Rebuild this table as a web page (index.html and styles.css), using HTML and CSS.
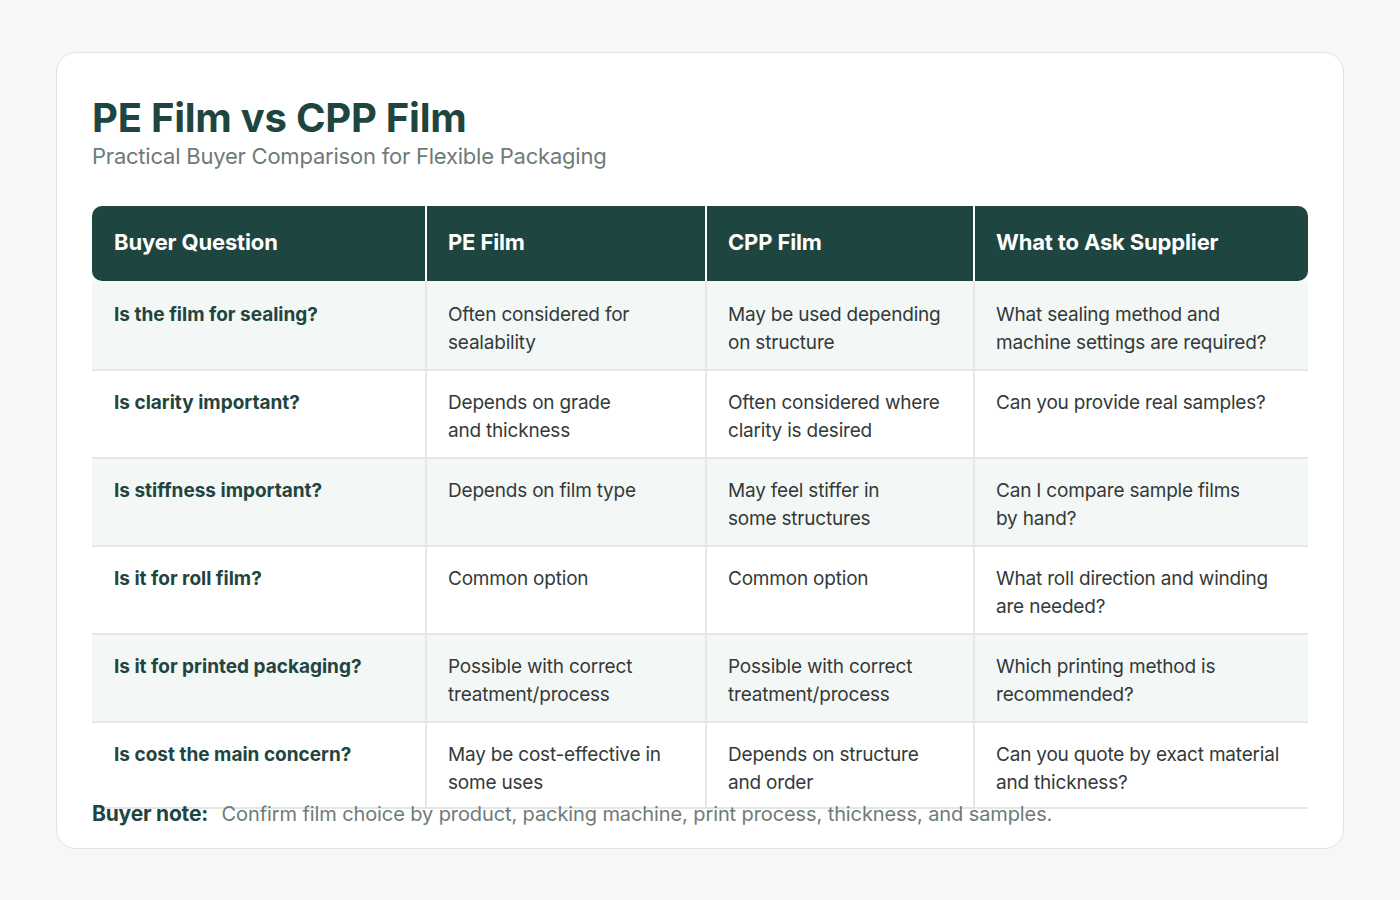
FILE: index.html
```html
<!DOCTYPE html>
<html lang="en">
<head>
<meta charset="utf-8">
<title>PE Film vs CPP Film</title>
<link rel="stylesheet" href="styles.css">
</head>
<body>
<div class="card">
  <h1 class="title">PE Film vs CPP Film</h1>
  <p class="subtitle">Practical Buyer Comparison for Flexible Packaging</p>
  <div class="table-wrap">
    <table class="cmp">
      <colgroup>
        <col class="c1"><col class="c2"><col class="c3"><col class="c4">
      </colgroup>
      <thead>
        <tr>
          <th>Buyer Question</th>
          <th>PE Film</th>
          <th>CPP Film</th>
          <th>What to Ask Supplier</th>
        </tr>
      </thead>
      <tbody>
        <tr class="alt">
          <td class="q">Is the film for sealing?</td>
          <td>Often considered for<br>sealability</td>
          <td>May be used depending<br>on structure</td>
          <td>What sealing method and<br>machine settings are required?</td>
        </tr>
        <tr>
          <td class="q">Is clarity important?</td>
          <td>Depends on grade<br>and thickness</td>
          <td>Often considered where<br>clarity is desired</td>
          <td>Can you provide real samples?</td>
        </tr>
        <tr class="alt">
          <td class="q">Is stiffness important?</td>
          <td>Depends on film type</td>
          <td>May feel stiffer in<br>some structures</td>
          <td>Can I compare sample films<br>by hand?</td>
        </tr>
        <tr>
          <td class="q">Is it for roll film?</td>
          <td>Common option</td>
          <td>Common option</td>
          <td>What roll direction and winding<br>are needed?</td>
        </tr>
        <tr class="alt">
          <td class="q">Is it for printed packaging?</td>
          <td>Possible with correct<br>treatment/process</td>
          <td>Possible with correct<br>treatment/process</td>
          <td>Which printing method is<br>recommended?</td>
        </tr>
        <tr>
          <td class="q">Is cost the main concern?</td>
          <td>May be cost-effective in<br>some uses</td>
          <td>Depends on structure<br>and order</td>
          <td>Can you quote by exact material<br>and thickness?</td>
        </tr>
      </tbody>
    </table>
  </div>
  <p class="note"><span class="note-label">Buyer note:</span> Confirm film choice by product, packing machine, print process, thickness, and samples.</p>
</div>
</body>
</html>
```

FILE: styles.css
```css
html, body {
  margin: 0;
  padding: 0;
}
body {
  background: #f7f7f7;
  font-family: "Inter", "Liberation Sans", sans-serif;
  color: #333a38;
}
.card {
  margin: 52px 56px 0 56px;
  background: #ffffff;
  border: 1px solid #e2e2e2;
  border-radius: 20px;
  padding: 41px 35px 21px 35px;
  height: 797px;
  box-sizing: border-box;
}
.title {
  margin: 0;
  font-size: 40px;
  line-height: 48px;
  font-weight: 700;
  color: #1f4540;
  letter-spacing: -0.25px;
}
.subtitle {
  margin: 0;
  font-size: 22px;
  line-height: 28px;
  color: #6e7b78;
  letter-spacing: -0.22px;
}
.table-wrap {
  margin-top: 36px;
  height: 594px;
}
.cmp {
  width: 1216px;
  border-collapse: separate;
  border-spacing: 0;
  table-layout: fixed;
}
.c1 { width: 333px; }
.c2 { width: 280px; }
.c3 { width: 268px; }
.c4 { width: 335px; }
.cmp th {
  background: #1f4540;
  color: #ffffff;
  font-size: 22px;
  font-weight: 700;
  letter-spacing: -0.15px;
  text-align: left;
  height: 75px;
  padding: 0 21px 4px 21px;
  box-sizing: border-box;
  vertical-align: middle;
  border-left: 2px solid #ffffff;
}
.cmp th:first-child {
  border-left: none;
  padding-left: 22px;
  border-radius: 10px 0 0 10px;
}
.cmp th:last-child {
  border-radius: 0 10px 10px 0;
}
.cmp td {
  height: 88px;
  box-sizing: border-box;
  padding: 18px 21px 0 21px;
  vertical-align: top;
  font-size: 19px;
  line-height: 28px;
  color: #343a39;
  letter-spacing: -0.2px;
  border-top: 2px solid #e4e7e6;
  border-left: 2px solid #e6e8e7;
}
.cmp td:first-child {
  border-left: none;
  padding-left: 22px;
}
.cmp tbody tr:first-child td {
  border-top: none;
  padding-top: 20px;
}
.cmp tbody tr:last-child td {
  border-bottom: 2px solid #e4e7e6;
}
.cmp tr.alt td {
  background: #f3f7f6;
}
.cmp td.q {
  font-weight: 700;
  color: #1f4540;
  letter-spacing: 0;
}
.note {
  margin: 0;
  font-size: 20px;
  line-height: 28px;
  color: #6e7b78;
  letter-spacing: -0.1px;
}
.note-label {
  font-weight: 700;
  color: #1f4540;
  font-size: 21px;
  letter-spacing: -0.2px;
  margin-right: 8px;
}
```
